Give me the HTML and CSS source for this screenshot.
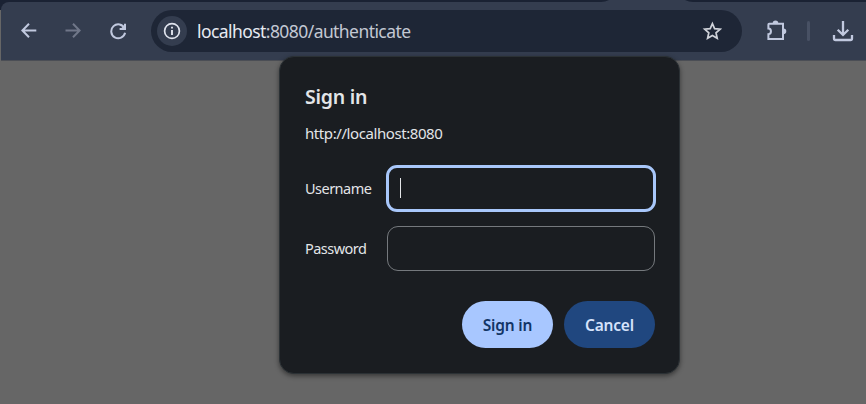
FILE: index.html
```html
<!DOCTYPE html>
<html lang="en">
<head>
<meta charset="utf-8">
<title>localhost:8080</title>
<link rel="stylesheet" href="styles.css">
</head>
<body>
<div class="browser">
  <div class="tabstrip"><svg class="tab" width="92" height="2" viewBox="0 0 92 2"><path d="M0 2Q4 2 8 0H84Q88 2 92 2Z" fill="#343d4f"/></svg></div>
  <header class="toolbar">
    <svg class="icon back" width="16" height="16" viewBox="0 0 16 16"><path d="M15.3 7.5H2M8 .7L1.4 7.5L8 14.3"/></svg>
    <svg class="icon forward" width="16" height="16" viewBox="0 0 16 16"><path d="M.5 7.5H14M8 .7L14.6 7.5L8 14.3"/></svg>
    <svg class="icon reload" width="17" height="17" viewBox="0 0 17 17"><path d="M14.6 5.3A7 7 0 1 0 15.1 9.8M15 .8V6H9.6"/><path class="solid" d="M15.5 1V6.3H10.2Z"/></svg>
    <div class="omnibox">
      <span class="site-info"><svg width="18" height="18" viewBox="0 0 18 18"><circle cx="9" cy="9" r="7.4" fill="none" stroke="#dfe3ed" stroke-width="1.7"/><path d="M9 8V13M9 4.8V6.6" stroke="#dfe3ed" stroke-width="1.9"/></svg></span>
      <span class="url"><span class="host">localhost</span>:8080/authenticate</span>
      <svg class="star" width="20" height="20" viewBox="0 0 20 20"><path d="M10.4 2.7L12.6 7.7L18.1 8.2L14 11.8L15.2 17.2L10.4 14.4L5.6 17.2L6.8 11.8L2.7 8.2L8.2 7.7Z"/></svg>
    </div>
    <svg class="icon puzzle" width="22" height="22" viewBox="0 0 22 22"><path d="M3.1 3.7H17V19H2.4V14.2C5.8 14.2 5.8 8.5 2.4 8.5V4.4Q2.4 3.7 3.1 3.7Z"/><path class="solid" d="M6.7 3.4A2.8 2.8 0 0 1 12.3 3.4ZM17.5 8.5A2.8 2.8 0 0 1 17.5 14.1Z"/></svg>
    <span class="divider"></span>
    <svg class="icon download" width="22" height="22" viewBox="0 0 22 22"><path d="M11 1V14.5M5.7 9.8L11 15L16.3 9.8M2 15V18.5Q2 20 3.5 20H18.5Q20 20 20 18.5V15"/></svg>
  </header>
  <main class="page">
    <form class="dialog">
      <h1>Sign in</h1>
      <p>http://localhost:8080</p>
      <div class="row"><label>Username</label><div class="field focused"><span class="caret"></span></div></div>
      <div class="row"><label>Password</label><div class="field"></div></div>
      <div class="actions"><button type="button" class="primary">Sign in</button><button type="button" class="secondary">Cancel</button></div>
    </form>
  </main>
</div>
</body>
</html>
```
FILE: styles.css
```css
* { box-sizing: border-box; }
body { margin: 0; font-family: "Noto Sans", sans-serif; overflow: hidden; }
.browser { height: 404px; display: flex; flex-direction: column; background: linear-gradient(#1a2233 10px, #666 10px); }
.tabstrip { height: 2px; background: #1a2233; padding-left: 601px; display: flex; }
.tab { display: block; }
.toolbar { height: 59px; margin-left: 1px; background: #343d4f; border-bottom: 1px solid #4b4e55; border-radius: 8px 0 0 0; display: flex; align-items: center; padding-left: 20px; }
.toolbar > * { flex: none; }
.icon { fill: none; stroke: #c1c9df; stroke-width: 2; }
.icon .solid { fill: #c1c9df; stroke: none; }
.icon.forward { stroke: #707789; margin-left: 28px; }
.reload { margin-left: 29px; }
.omnibox { width: 591px; height: 42px; margin-left: 24px; border-radius: 21px; background: #1e2636; display: flex; align-items: center; padding: 0 20px 0 6px; }
.site-info { width: 30px; height: 30px; border-radius: 50%; background: #343d4f; display: flex; align-items: center; justify-content: center; }
.url { margin-left: 10px; font-size: 17.5px; line-height: 42px; color: #c3c8d3; letter-spacing: -.57px; white-space: nowrap; flex: 1; }
.host { color: #e7eaf2; }
.star { fill: none; stroke: #d0d3da; stroke-width: 1.7; }
.puzzle { margin-left: 24px; }
.divider { width: 3px; height: 20px; margin-left: 19px; background: #485164; border-radius: 2px; }
.icon.download { margin-left: 22px; stroke-width: 2.3; }
.page { flex: 1; padding-left: 279px; }
.dialog { width: 401px; height: 318px; margin-top: -5px; padding: 26px 24px 0 25px; border-radius: 15px; border: 1px solid #2b3135; background: #1a1d21; box-shadow: 0 2px 5px #0007; color: #e3e5e8; position: relative; }
h1 { margin: 0; font-size: 19.5px; line-height: 28px; font-weight: 600; letter-spacing: -.25px; }
p { margin: 11px 0 21px; font-size: 15px; line-height: 22px; letter-spacing: -.42px; }
.row { height: 47px; display: flex; align-items: center; margin-bottom: 13px; }
label { width: 82px; font-size: 14.5px; letter-spacing: -.53px; padding-bottom: 2px; }
.field { width: 268px; height: 45px; border: 1px solid #75797d; border-radius: 11px; }
.focused { width: 270px; height: 47px; margin: 0 -1px; border: 3px solid #a8c7fa; display: flex; align-items: center; padding-left: 11px; flex: none; }
.caret { width: 1px; height: 20px; margin-bottom: 1px; background: #e3e5e8; }
.actions { display: flex; justify-content: flex-end; gap: 11px; margin-top: 29px; }
button { width: 91px; height: 47px; padding: 1px 0 0; border: 0; border-radius: 24px; font: 600 15.5px "Noto Sans", sans-serif; letter-spacing: -.2px; }
.primary { background: #a8c7ff; color: #123566; }
.secondary { background: #20477f; color: #d5e2fb; }
```
